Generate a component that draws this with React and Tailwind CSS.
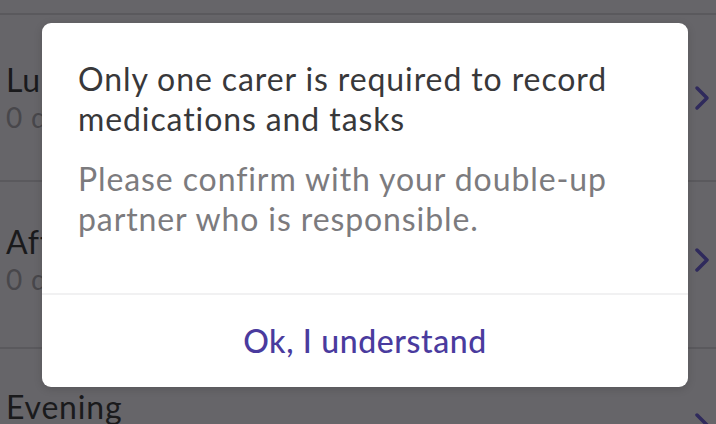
export default function App() {
  const rows = [
    { t: 'Lunch', s: '0 due', pt: 'pt-[46px]' },
    { t: 'Afternoon', s: '0 due', pt: 'pt-[41px]' },
    { t: 'Evening', s: '0 due', pt: 'pt-[39px]' },
  ];
  return (
    <div className="relative w-[716px] h-[424px] overflow-hidden bg-[#666569] font-['Lato',sans-serif]">
      <div className="pt-[13px]">
        <div className="border-t-2 border-[#5a595d]" />
        {rows.map((r, i) => (
          <div key={i} className={`h-[167px] border-b-2 border-[#5a595d] pl-[6px] pr-[6px] tracking-[0.8px] ${r.pt}`}>
            <div className="flex items-center">
              <div className="flex-1">
                <div className="text-[32px] leading-[38px] text-[#1a1a1c]">{r.t}</div>
                <div className="text-[28px] leading-[36px] text-[#48474b]">{r.s}</div>
              </div>
              <svg width="16" height="26" viewBox="0 0 16 26">
                <path d="M3 3 L13 13 L3 23" fill="none" stroke="#2f2a5c" strokeWidth="3.5" strokeLinecap="round" strokeLinejoin="round" />
              </svg>
            </div>
          </div>
        ))}
      </div>
      <div className="absolute left-[42px] top-[23px] w-[646px] h-[364px] bg-white rounded-[9px] flex flex-col shadow-[0_2px_8px_rgba(0,0,0,0.15)]">
        <div className="flex-1 pl-[36px] pr-[20px] pt-[36px] tracking-[0.9px]">
          <div className="text-[32px] leading-[40px] text-[#38383a]">Only one carer is required to record medications and tasks</div>
          <div className="mt-[20px] text-[32px] leading-[40px] text-[#7c7b7e]">Please confirm with your double-up partner who is responsible.</div>
        </div>
        <div className="h-[2px] bg-[#f1f1f2]" />
        <div className="h-[92px] flex items-center justify-center text-[32px] text-[#4a3b9e] font-medium tracking-[0.6px]">Ok, I understand</div>
      </div>
    </div>
  );
}
